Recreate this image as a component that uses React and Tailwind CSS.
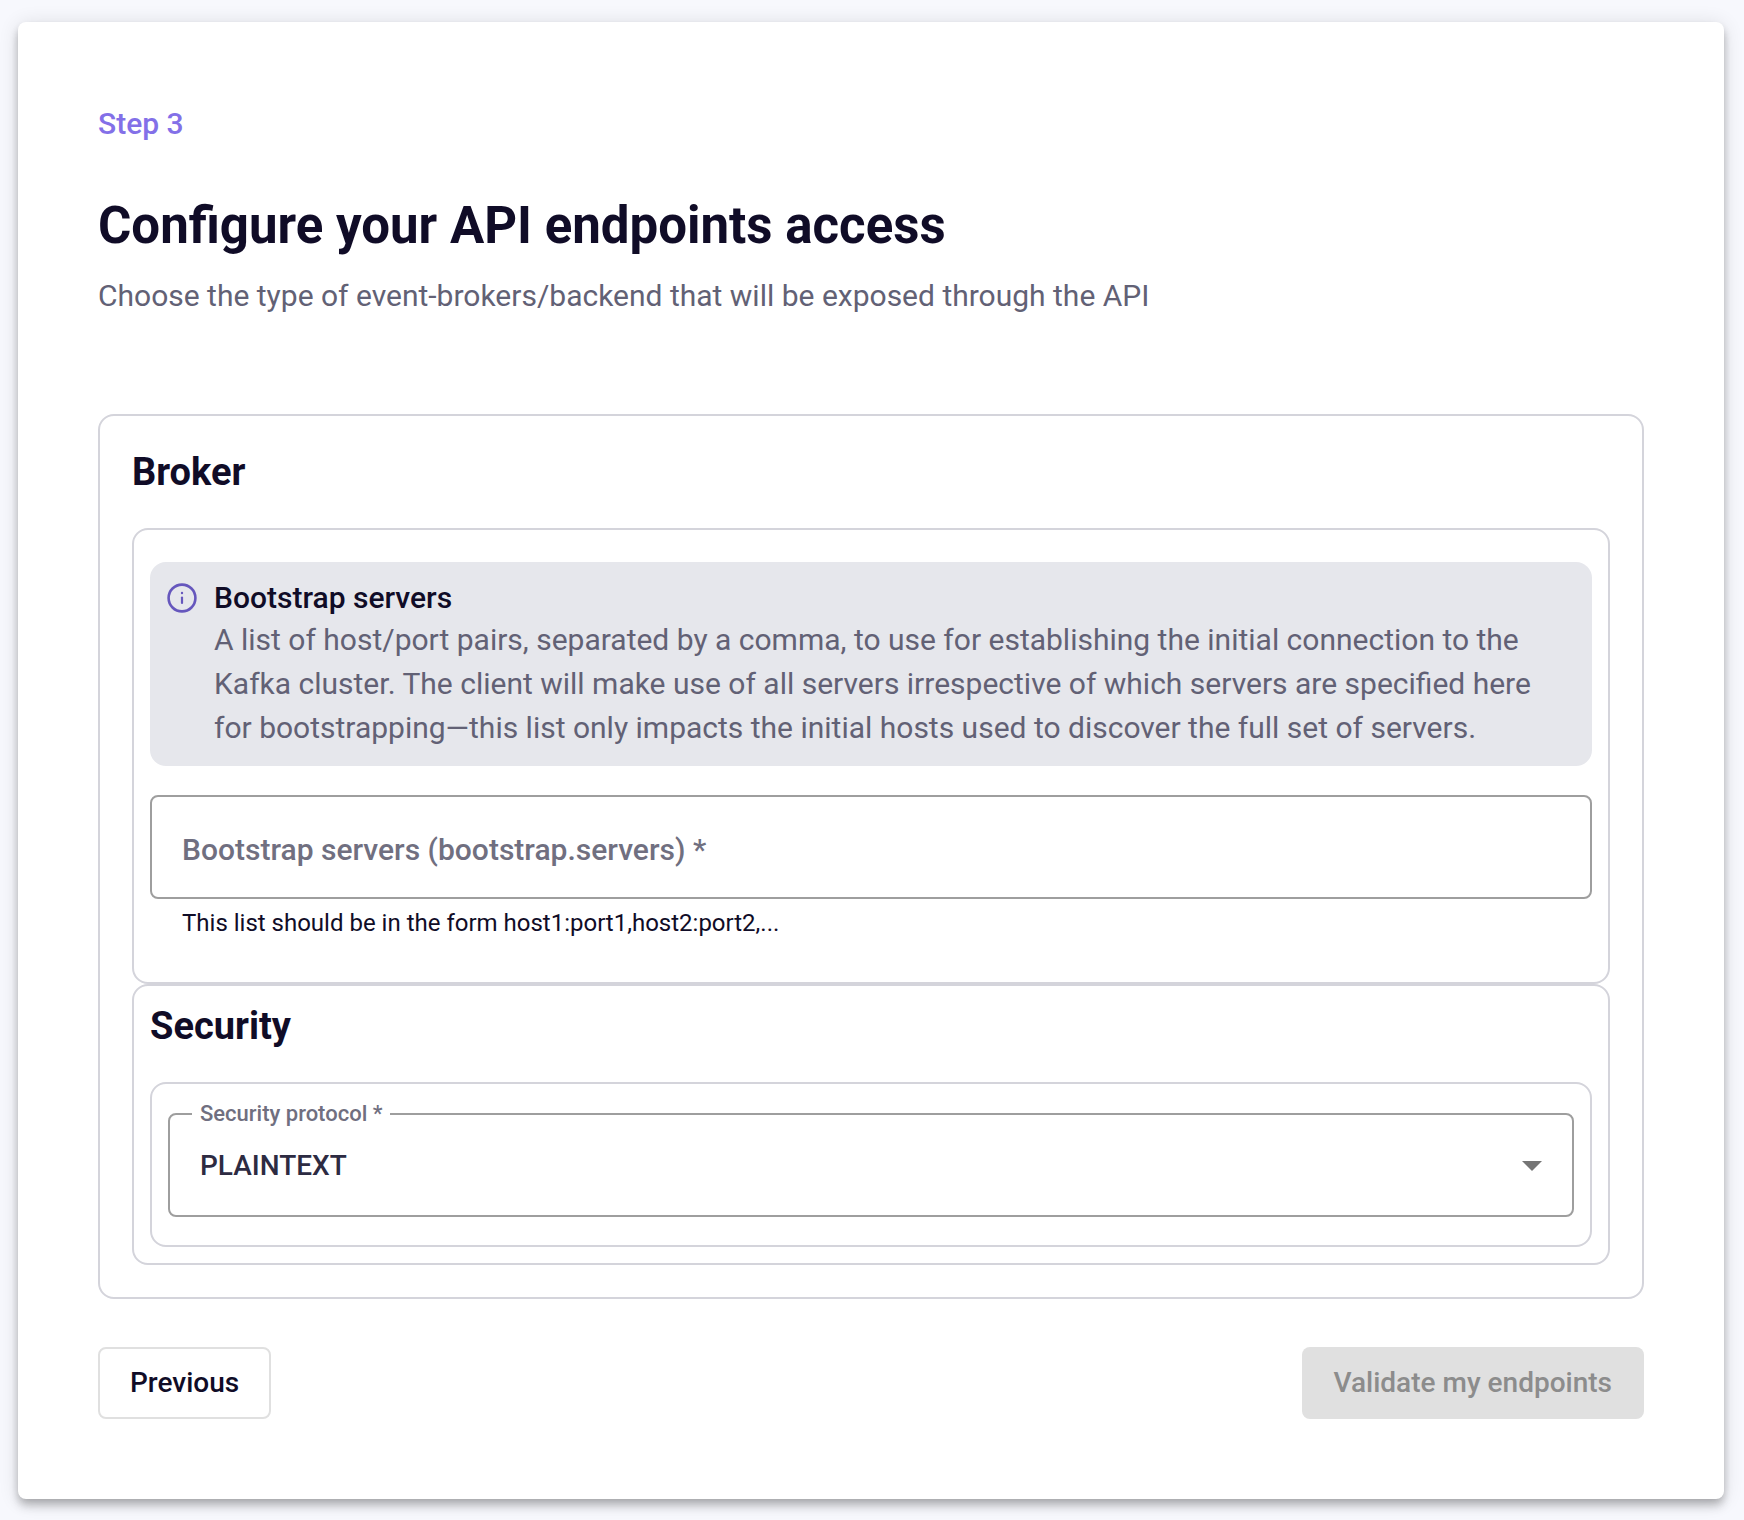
import { useState } from "react";

function InfoIcon() {
  return (
    <svg viewBox="0 0 32 32" className="size-8" fill="none" stroke="#6657bd" strokeWidth="2.6" strokeLinecap="round" aria-hidden="true">
      <circle cx="16" cy="16" r="13.4" />
      <path d="M16 15.6V21" strokeWidth="2.2" />
      <path d="M16 10.9v.1" strokeWidth="2.4" />
    </svg>
  );
}

function InfoBanner({ title, children }) {
  return (
    <div className="flex gap-4 rounded-2xl bg-[#e6e7ec] p-4">
      <div className="flex h-10 shrink-0 items-center">
        <InfoIcon />
      </div>
      <div>
        <h3 className="leading-10 font-medium">{title}</h3>
        <p className="leading-11 text-[#626175]">{children}</p>
      </div>
    </div>
  );
}

function ServersField() {
  const [value, setValue] = useState("");
  return (
    <div>
      <div className="relative">
        <input
          id="bootstrap-servers"
          type="text"
          required
          aria-describedby="bootstrap-servers-hint"
          value={value}
          onChange={(e) => setValue(e.target.value)}
          className="block h-26 w-full rounded-lg border-2 border-[#9e9e9e] bg-transparent px-[30px] outline-none"
        />
        {value === "" && (
          <label htmlFor="bootstrap-servers" className="pointer-events-none absolute inset-x-8 top-[33px] leading-11 font-medium text-[#706f80]">
            Bootstrap servers (bootstrap.servers) *
          </label>
        )}
      </div>
      <p id="bootstrap-servers-hint" className="mt-2 px-8 text-2xl leading-8">
        This list should be in the form host1:port1,host2:port2,...
      </p>
    </div>
  );
}

function ProtocolField() {
  return (
    <fieldset className="relative rounded-lg border-2 border-[#9e9e9e]">
      <legend className="ml-[22px] px-2 text-[22px] leading-6 font-medium text-[#706f80]">
        <label htmlFor="security-protocol">Security protocol *</label>
      </legend>
      <select
        id="security-protocol"
        defaultValue="PLAINTEXT"
        className="block h-[89px] w-full appearance-none bg-transparent px-[30px] pb-[10px] text-[28px] font-medium text-[#2d2b42] outline-none"
      >
        <option>PLAINTEXT</option>
        <option>SASL_PLAINTEXT</option>
        <option>SASL_SSL</option>
        <option>SSL</option>
      </select>
      <svg viewBox="0 0 20 10" className="pointer-events-none absolute top-[35px] right-[30px] h-[10px] w-5" fill="#757575" aria-hidden="true">
        <path d="M0 0h20L10 10z" />
      </svg>
    </fieldset>
  );
}

export default function App() {
  return (
    <div className="min-h-screen bg-[#f7f8fd] pt-[22px] pr-5 pb-[21px] pl-[18px] font-['Roboto',sans-serif] text-[30px] text-[#100c27]">
      <main className="rounded-lg bg-white p-20 shadow-[0_4px_8px_-2px_rgba(0,0,0,0.2),0_8px_10px_0_rgba(0,0,0,0.14),0_2px_20px_0_rgba(0,0,0,0.12)]">
        <p className="leading-11 font-medium text-[#8370e8]">Step 3</p>
        <h1 className="mt-12 text-[51px] leading-16 font-bold">Configure your API endpoints access</h1>
        <p className="mt-4 leading-11 text-[#626175]">
          Choose the type of event-brokers/backend that will be exposed through the API
        </p>

        <form onSubmit={(e) => e.preventDefault()}>
          <section className="mt-24 rounded-2xl border-2 border-[#d4d4db] p-8">
            <h2 className="text-[38px] leading-12 font-bold">Broker</h2>
            <div className="mt-8 rounded-2xl border-2 border-[#d4d4db] px-4 pt-8 pb-[43px]">
              <InfoBanner title="Bootstrap servers">
                A list of host/port pairs, separated by a comma, to use for establishing the initial connection to the
                Kafka cluster. The client will make use of all servers irrespective of which servers are specified here
                for bootstrapping—this list only impacts the initial hosts used to discover the full set of servers.
              </InfoBanner>
              <div className="mt-[29px]">
                <ServersField />
              </div>
            </div>
            <div className="rounded-2xl border-2 border-[#d4d4db] p-4">
              <h2 className="text-[38px] leading-12 font-bold">Security</h2>
              <div className="mt-8 rounded-2xl border-2 border-[#d4d4db] px-4 pt-[18px] pb-7">
                <ProtocolField />
              </div>
            </div>
          </section>

          <div className="mt-12 flex justify-between text-[28px]">
            <button type="button" className="h-18 rounded-lg border-2 border-[#e0e0e0] px-[30px] font-medium">
              Previous
            </button>
            <button type="submit" disabled className="h-18 rounded-lg bg-[#e0e0e0] px-8 font-medium text-[#8c8c8c]">
              Validate my endpoints
            </button>
          </div>
        </form>
      </main>
    </div>
  );
}
